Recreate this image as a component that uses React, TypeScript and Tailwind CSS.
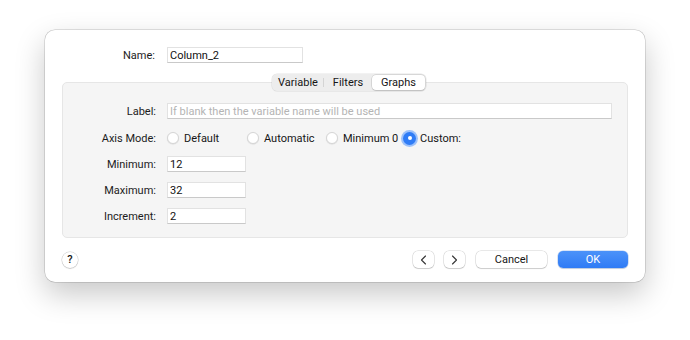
import React from "react";

const font = { fontFamily: "Roboto, 'Liberation Sans', sans-serif" };

function Field({ value, placeholder, className }: { value?: string; placeholder?: string; className: string }) {
  return (
    <div
      className={`flex h-[16px] items-center border border-[#e2e2e2] border-b-[#c9c9c9] bg-white px-[2px] text-[11px] leading-none ${className}`}
    >
      {value ? (
        <span className="text-[#111]">{value}</span>
      ) : (
        <span className="text-[#b4b4b4]">{placeholder}</span>
      )}
    </div>
  );
}

function Radio({ label, checked, width }: { label: string; checked?: boolean; width: string }) {
  return (
    <div className={`flex items-center ${width}`}>
      {checked ? (
        <div className="flex h-[13px] w-[13px] items-center justify-center rounded-full bg-[#2f7cf6] ring-[2px] ring-[#9cc1fa]">
          <div className="h-[4px] w-[4px] rounded-full bg-white" />
        </div>
      ) : (
        <div className="h-[12px] w-[12px] rounded-full border border-[#d6d6d6] bg-white shadow-[0_0.5px_1px_rgba(0,0,0,0.12)]" />
      )}
      <span className={`${checked ? "ml-[4px]" : "ml-[5px]"} text-[11px] leading-none text-[#161616]`}>{label}</span>
    </div>
  );
}

function Row({ label, children, className = "" }: { label: string; children: React.ReactNode; className?: string }) {
  return (
    <div className={`flex h-[16px] items-center ${className}`}>
      <div className="w-[93px] text-right text-[11px] leading-none text-[#1c1c1c]">{label}</div>
      <div className="ml-[11px] flex items-center">{children}</div>
    </div>
  );
}

const btn =
  "flex h-[17px] items-center justify-center rounded-[5px] bg-white text-[11px] leading-none text-[#161616] shadow-[0_0_0_0.5px_rgba(0,0,0,0.18),0_1px_1px_rgba(0,0,0,0.12)]";

export default function App() {
  return (
    <div className="h-[340px] w-[690px] overflow-hidden bg-white pl-[45px] pt-[30px]" style={font}>
      <div className="flex h-[252px] w-[600px] flex-col rounded-[10px] bg-white px-[17px] pt-[17px] shadow-[0_0_0_0.5px_rgba(0,0,0,0.22),0_12px_30px_rgba(0,0,0,0.22)]">
        {/* Name */}
        <div className="flex h-[16px] items-center">
          <div className="w-[93px] text-right text-[11px] leading-none text-[#1c1c1c]">Name:</div>
          <Field value="Column_2" className="ml-[12px] w-[136px]" />
        </div>

        {/* Group box */}
        <div className="mt-[19px] h-[156px] w-[566px] rounded-[5px] border border-[#e6e6e6] bg-[#f5f5f5]">
          <div className="-mt-[9px] ml-[209px] flex h-[17px] w-[154px] items-center rounded-[5px] bg-[#ededed] p-[1px] text-[11px] leading-none text-[#161616] shadow-[0_0_0_0.5px_rgba(0,0,0,0.1)]">
            <div className="flex h-full w-[50px] items-center justify-center">Variable</div>
            <div className="h-[9px] w-px bg-[#d4d4d4]" />
            <div className="flex h-full w-[48px] items-center justify-center">Filters</div>
            <div className="flex h-full flex-1 items-center justify-center rounded-[4px] bg-white shadow-[0_0_0_0.5px_rgba(0,0,0,0.18),0_1px_1px_rgba(0,0,0,0.1)]">
              Graphs
            </div>
          </div>

          <Row label="Label:" className="mt-[12px]">
            <Field placeholder="If blank then the variable name will be used" className="w-[445px]" />
          </Row>

          <Row label="Axis Mode:" className="mt-[11px]">
            <Radio label="Default" width="w-[80px]" />
            <Radio label="Automatic" width="w-[79px]" />
            <Radio label="Minimum 0" width="w-[77px]" />
            <Radio label="Custom:" checked width="w-[80px]" />
          </Row>

          <Row label="Minimum:" className="mt-[10px]">
            <Field value="12" className="w-[79px]" />
          </Row>
          <Row label="Maximum:" className="mt-[10px]">
            <Field value="32" className="w-[79px]" />
          </Row>
          <Row label="Increment:" className="mt-[10px]">
            <Field value="2" className="w-[79px]" />
          </Row>
        </div>

        {/* Footer */}
        <div className="mt-[13px] flex items-center">
          <div className="flex h-[16px] w-[16px] items-center justify-center rounded-full bg-white text-[11px] font-medium leading-none text-[#161616] shadow-[0_0_0_0.5px_rgba(0,0,0,0.2),0_1px_1px_rgba(0,0,0,0.12)]">
            ?
          </div>
          <div className="ml-auto flex items-center">
            <div className={`${btn} w-[21px]`}>
              <svg width="7" height="10" viewBox="0 0 7 10" fill="none">
                <path d="M5.5 1 L1.5 5 L5.5 9" stroke="#333" strokeWidth="1.1" strokeLinecap="round" strokeLinejoin="round" />
              </svg>
            </div>
            <div className={`${btn} ml-[10px] w-[21px]`}>
              <svg width="7" height="10" viewBox="0 0 7 10" fill="none">
                <path d="M1.5 1 L5.5 5 L1.5 9" stroke="#333" strokeWidth="1.1" strokeLinecap="round" strokeLinejoin="round" />
              </svg>
            </div>
            <div className={`${btn} ml-[11px] w-[71px]`}>Cancel</div>
            <div className="ml-[11px] flex h-[17px] w-[70px] items-center justify-center rounded-[5px] bg-gradient-to-b from-[#4b92f9] to-[#2f7bf5] text-[11px] leading-none text-white shadow-[0_0_0_0.5px_rgba(0,80,200,0.3),0_1px_1px_rgba(0,0,0,0.12)]">
              OK
            </div>
          </div>
        </div>
      </div>
    </div>
  );
}
